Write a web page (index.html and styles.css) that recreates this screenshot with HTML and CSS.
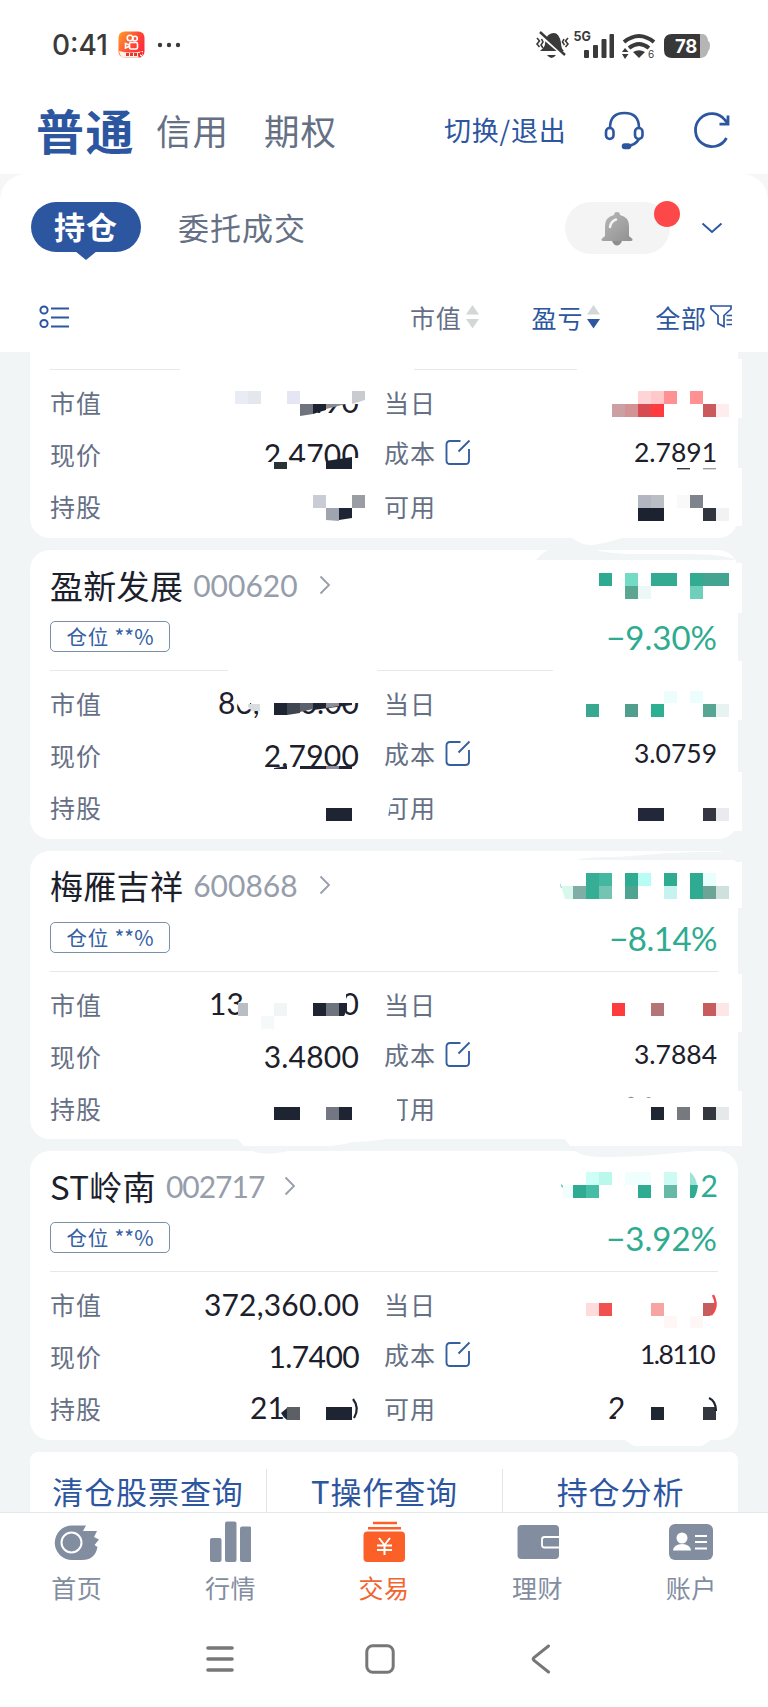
FILE: index.html
```html
<!DOCTYPE html>
<html lang="zh-CN">
<head>
<meta charset="utf-8">
<title>持仓</title>
<link rel="stylesheet" href="styles.css">
</head>
<body>
<svg class="defs" width="0" height="0">
  <symbol id="edit" viewBox="0 0 26 26"><path d="M15.500 2H5Q1.500 2 1.500 5.500V21.500Q1.500 25 5 25H20.500Q24 25 24 21.500V10M13.500 12.500L24.500 1.500" fill="none" stroke="#35609f" stroke-width="1.900"/></symbol>
  <symbol id="arrow" viewBox="0 0 12 20"><path d="M1.500 1.500L10 10L1.500 18.500" fill="none" stroke="#969dab" stroke-width="1.800"/></symbol>
</svg>
<div class="screen">
  <div class="status">
    <span class="clock">0:41</span>
    <svg class="app" width="27" height="28" viewBox="0 0 27 28">
      <defs><linearGradient id="g" x1="0" y1="0" x2="1" y2=".6"><stop offset="0" stop-color="#ffa02a"/><stop offset=".6" stop-color="#ff4a35"/><stop offset="1" stop-color="#ff2a3a"/></linearGradient></defs>
      <rect x=".5" y=".5" width="26" height="26" rx="6" fill="url(#g)"/>
      <path d="M1 20Q13 23 25 20V22Q25 26 20 26.500H6Q2 26 1 20Z" fill="#fff2e6"/>
      <g fill="none" stroke="#fff" stroke-width="1.600"><circle cx="12" cy="7" r="2.800"/><circle cx="17" cy="7.500" r="2.300"/><rect x="11.500" y="11.500" width="8" height="6.500" rx="1.500"/><path d="M11 14L7.500 12.500V17L11 15.500"/></g>
      <path d="M8 23.500H22M24 21L21 26" stroke="#e5372b" stroke-width="3" stroke-dasharray="3 1"/>
    </svg>
    <svg class="dots" width="24" height="6" viewBox="0 0 24 6" fill="#3a3a3a"><circle cx="3" cy="3" r="2.200"/><circle cx="12" cy="3" r="2.200"/><circle cx="21" cy="3" r="2.200"/></svg>
    <svg class="sys" width="176" height="32" viewBox="536 28 176 32">
      <g fill="#3a3a3a">
        <path d="M552 32.500Q560 30 562 42Q562 47 565 50H541Q546 46 546 43Q546 35 552 32.500Z"/><path d="M548 54H557Q552.500 60 548 54Z"/>
        <rect x="585" y="49" width="5" height="8" rx="1"/><rect x="594" y="44" width="5" height="13" rx="1"/><rect x="602.500" y="38" width="5" height="19" rx="1"/><rect x="610.500" y="33" width="4.500" height="24" rx="1"/>
        <path d="M634 51Q640 47.500 646 51L640 57Z"/><path d="M623 51L626 47L629.500 51ZM623 53H629.500L626 58Z"/>
      </g>
      <path d="M539 32L567 56" stroke="#fff" stroke-width="3"/><path d="M541 31L566 54" stroke="#3a3a3a" stroke-width="2.400"/>
      <path d="M538 37L540.500 40L538 43L540.500 46M542.500 38L544 41L542 44L544 47M569 37L566.500 40L569 43L566.500 46M565 38L563.500 41L565.500 44" fill="none" stroke="#3a3a3a" stroke-width="1.600"/>
      <g fill="none" stroke="#3a3a3a" stroke-width="4"><path d="M625 41Q640 29 655 41"/><path d="M630 47Q640 39 650 47"/></g>
      <text class="net" x="574.500" y="40">5G</text><text class="six" x="649" y="57">6</text>
      <path d="M704 33Q708.500 34 709 39.500Q711 41 711 45Q711 49 709 50.500Q708 56 702 57H698V33Z" fill="#b5b5b5"/>
      <path d="M673 33H701V57H673Q665 57 665 49V41Q665 33 673 33Z" fill="#383838"/>
      <text class="batt" x="687" y="52">78</text>
    </svg>
  </div>
  <div class="account">
    <span class="acct-on">普通</span><span class="acct">信用</span><span class="acct acct-last">期权</span>
    <span class="switch">切换/退出</span>
    <svg class="headset" width="42" height="42" viewBox="604 108 42 42" fill="none" stroke="#2d56a0" stroke-width="2.600"><path d="M611 127Q611 112 625.500 112Q640 112 640 127M640 138Q636 145 627 145"/><rect x="607" y="127" width="7.500" height="11" rx="3.700"/><rect x="636" y="127" width="7.500" height="11" rx="3.700"/><rect x="624" y="143.500" width="7" height="3.500" rx="1.700" fill="#2d56a0"/></svg>
    <svg class="refresh" width="40" height="40" viewBox="692 110 40 40" fill="none" stroke="#2d56a0" stroke-width="2.800"><path d="M727.500 138A16.500 16.500 0 1 1 726 120L729 123.500"/><path d="M729 115.500V124.200H720.500"/></svg>
  </div>
  <div class="panel-back"><div class="panel">
    <div class="views">
      <span class="view-on">持仓<svg class="tip" width="22" height="9" viewBox="0 0 22 9"><path d="M0 0H22L11 9Z" fill="#2d56a0"/></svg></span>
      <span class="view">委托成交</span>
      <span class="bell"><svg width="34" height="36" viewBox="0 0 34 36">
        <defs><linearGradient id="b" x1="0" y1="0" x2="1" y2="1"><stop offset="0" stop-color="#b9b9b9"/><stop offset="1" stop-color="#909090"/></linearGradient></defs>
        <path d="M17 1Q20 1 20 4Q29 6 29 15V25L32.500 28Q33 30 31 30H3Q1 30 1.500 28L5 25V15Q5 6 14 4Q14 1 17 1Z" fill="url(#b)"/><path d="M12 30H22Q20 34.500 17 34.500Q14 34.500 12 30Z" fill="#8e8e8e"/><path d="M10 16Q11 10 16 8.500" stroke="#f2f2f2" stroke-width="2.500" fill="none" stroke-linecap="round"/></svg><i class="badge"></i></span>
      <svg class="down" width="22" height="14" viewBox="0 0 22 14"><path d="M1.500 2.500L11 11L20.500 2.500" fill="none" stroke="#2d56a0" stroke-width="1.900"/></svg>
    </div>
    <div class="sorts">
      <svg class="list-ic" width="30" height="26" viewBox="39 305 30 26" fill="none" stroke="#2d56a0" stroke-width="2"><circle cx="44" cy="311" r="3.600"/><circle cx="44" cy="324.500" r="3.600"/><path d="M51 309.500H69M51 318.500H69M51 327.500H69"/></svg>
      <span class="sort s1">市值<svg width="13" height="24" viewBox="0 0 13 24" fill="#d3d7d8"><path d="M6.500 0L13 9.500H0Z"/><path d="M0 14H13L6.500 23.500Z"/></svg></span>
      <span class="sort blue s2">盈亏<svg width="13" height="24" viewBox="0 0 13 24"><path d="M6.500 0L13 9.500H0Z" fill="#d3d7d8"/><path d="M0 14H13L6.500 23.500Z" fill="#2d56a0"/></svg></span>
      <span class="sort blue s3">全部<svg width="23" height="23" viewBox="0 0 23 23" fill="none" stroke="#2d56a0" stroke-width="1.700"><path d="M1 1H21V4L14 10.500V21.500L8 18.500V10.500L1 4Z"/><path d="M16.500 10.500H22M16.500 15H22M16.500 19.500H22"/></svg></span>
    </div>
  </div></div>

  <div class="holdings">
    <section class="card card-first">
      <div class="rows">
        <div class="row"><span>市值</span></div><div class="row r"><span>当日</span></div>
        <div class="row"><span>现价</span><b class="num">2.4700</b></div><div class="row r up"><span>成本</span><svg class="edit"><use href="#edit"/></svg><b class="num sm">2.7891</b></div>
        <div class="row"><span>持股</span></div><div class="row r"><span>可用</span></div>
      </div>
    </section>
    <section class="card">
      <div class="head"><span class="name">盈新发展</span><span class="code">000620</span><svg class="go"><use href="#arrow"/></svg></div>
      <div class="sub"><span class="tag">仓位 <span class="stars">**%</span></span><span class="pct">−9.30%</span></div>
      <div class="rows">
        <div class="row"><span>市值</span></div><div class="row r"><span>当日</span></div>
        <div class="row"><span>现价</span><b class="num">2.7900</b></div><div class="row r up"><span>成本</span><svg class="edit"><use href="#edit"/></svg><b class="num sm">3.0759</b></div>
        <div class="row"><span>持股</span></div><div class="row r"><span>可用</span></div>
      </div>
    </section>
    <section class="card">
      <div class="head"><span class="name">梅雁吉祥</span><span class="code">600868</span><svg class="go"><use href="#arrow"/></svg></div>
      <div class="sub"><span class="tag">仓位 <span class="stars">**%</span></span><span class="pct pct-b">−8.14%</span></div>
      <div class="rows">
        <div class="row"><span>市值</span></div><div class="row r"><span>当日</span></div>
        <div class="row"><span>现价</span><b class="num">3.4800</b></div><div class="row r up"><span>成本</span><svg class="edit"><use href="#edit"/></svg><b class="num sm">3.7884</b></div>
        <div class="row"><span>持股</span></div><div class="row r"><span>可用</span></div>
      </div>
    </section>
    <section class="card">
      <div class="head"><span class="name">ST岭南</span><span class="code code-b">002717</span><svg class="go"><use href="#arrow"/></svg></div>
      <div class="sub"><span class="tag">仓位 <span class="stars">**%</span></span><span class="pct">−3.92%</span></div>
      <div class="rows">
        <div class="row"><span>市值</span><b class="num">372,360.00</b></div><div class="row r"><span>当日</span></div>
        <div class="row"><span>现价</span><b class="num ones">1.7400</b></div><div class="row r up"><span>成本</span><svg class="edit"><use href="#edit"/></svg><b class="num sm ones-sm">1.8110</b></div>
        <div class="row"><span>持股</span></div><div class="row r"><span>可用</span></div>
      </div>
    </section>
    <nav class="queries"><span>清仓股票查询</span><span>T操作查询</span><span>持仓分析</span></nav>

    <!-- privacy mosaic laid over the amounts -->
    <svg class="mosaic" width="768" height="1160" viewBox="0 352 768 1160">
      <g fill="#fff">
        <path d="M180 365H414V374H180ZM577 365H722V374H577ZM228 666H377V675H228ZM553 666H722V675H553Z"/>
        <path d="M730 359H742V418H730ZM730 468H742V526H730ZM730 563H742V613H730ZM730 661H742V720H730ZM730 772H742V831H730ZM730 862H742V908H730ZM730 974H742V1032H730ZM730 1091H742V1146H730Z"/>
        <path d="M572 538Q581 545 590 545Q600 545 622 538Z"/>
        <path d="M237 1138L244 1146H328Q342 1145 352 1142Q380 1141 388 1138Z"/>
        <path d="M564 1138L570 1146H742V1125H700Z"/>
        <path d="M623 1439L634 1446H702L712 1439Z"/>
      </g>
      <g fill="#f1f5f6">
        <path d="M536 560Q543 551 552 549H594Q604 554 640 554C690 554 718 553 734 559V560Z"/>
        <path d="M577 860Q584 857 610 857C650 856 650 852 720 852H742V860Z"/>
        <path d="M250 1150Q263 1157 288 1151Z"/><path d="M574 1150Q582 1157 600 1157C660 1157 670 1152 714 1150Z"/>
      </g>

      <!-- first card -->
      <text class="frag" x="359" y="413" text-anchor="end">490</text>
      <path d="M296 385H366V404H296Z" fill="#fff"/>
      <g><path fill="#e9ecf5" d="M235 391h13v13h-13z"/><path fill="#e4e7ec" d="M248 391h13v13h-13z"/><path fill="#e4e6f3" d="M287 391h13v13h-13z"/><path fill="#c9cbd0" d="M352 391h13v9l-13 4z"/>
      <path fill="#6f737d" d="M300 404h13v10l-13 2z"/><path fill="#1c2230" d="M313 404h13v6l-13 4z"/><path fill="#888c93" d="M326 404h20l-20 5z"/></g>
      <path d="M262 462H326V472H262ZM352 458H362V472H352Z" fill="#fff"/>
      <path fill="#2a3236" d="M274 462h13v7h-13z"/><path fill="#1c2230" d="M326 461l26-4v12h-26z"/>
      <path fill="#c9ccd5" d="M313 495h13v13h-13z"/><path fill="#9a9ea4" d="M352 495h13v13h-13z"/><path fill="#a0a4ad" d="M326 508h13v13l-13-1z"/><path fill="#1f2534" d="M339 508h13v10l-13 2z"/>
      <path fill="#ffd4d6" d="M638 391h13v13h-13z"/><path fill="#ffc9cc" d="M651 391h13v13h-13z"/><path fill="#ff9192" d="M664 391h13v13h-13zM690 391h13v13h-13z"/>
      <path fill="#cba0a4" d="M612 404h13v13h-13z"/><path fill="#d39294" d="M625 404h13v13h-13z"/><path fill="#d64c50" d="M638 404h13v13h-13z"/><path fill="#ff3b3e" d="M651 404h13v13h-13z"/><path fill="#cb5a5c" d="M703 404h13v13h-13z"/><path fill="#ffeced" d="M716 404h13v13h-13z"/>
      <path fill="#353942" d="M677 468h13v1.400h-13z"/><path fill="#9b9fa5" d="M703 468h13v1.400h-13z"/>
      <path fill="#b2b6c0" d="M638 495h13v13h-13z"/><path fill="#bbbfc5" d="M651 495h13v13h-13z"/><path fill="#7f838c" d="M690 495h13v13h-13z"/><path fill="#f9f9fa" d="M677 495h13v13h-13z"/><path fill="#1c2230" d="M638 508h26v13h-26z"/><path fill="#30353e" d="M703 508h13v13h-13z"/><path fill="#f2f2f5" d="M716 508h13v13h-13z"/>

      <!-- second card -->
      <text class="frag" x="218" y="714">86,</text><text class="frag" x="359" y="714" text-anchor="end">0.00</text>
      <path d="M230 688L236 703H366V688Z" fill="#fff"/>
      <path d="M236 700H250V709Q243 712 239 707Z" fill="#fff"/>
      <path fill="#d9dde0" d="M248 704h12v7h-8l-4-4z"/>
      <path fill="#1f2432" d="M274 703h13v12h-13z"/><path fill="#404552" d="M287 703h13v10l-13 2z"/><path fill="#5c606d" d="M300 703h13v6l-13 3z"/><path fill="#1f2432" d="M313 703h39v2l-39 5z"/><path fill="#8a8e96" d="M326 703h13v3l-13 2z"/>
      <path fill="#1f2432" d="M274 769v-1l13-2v3zM300 766h52v3h-52z"/><path fill="#8a8e96" d="M326 766h13v3h-13z"/>
      <path fill="#1f2432" d="M326 808h26v13h-26z"/>
      <path d="M382 797H394Q391 801 390 806L387 823H382Z" fill="#fff"/>
      <path fill="#2eaa90" d="M599 573h13v13h-13z"/><path fill="#73dbc5" d="M625 573h13v13h-13z"/><path fill="#33ab92" d="M651 573h26v13h-26zM690 573h13v13h-13z"/><path fill="#43a591" d="M703 573h26v13h-26z"/>
      <path fill="#5aa692" d="M625 586h13v13h-13z"/><path fill="#ebf8f5" d="M638 586h13v13h-13z"/><path fill="#6ed0bb" d="M690 586h13v13h-13z"/>
      <path fill="#ecfdfd" d="M664 691h13v12h-13zM690 691h13v12h-13z"/><path fill="#38a990" d="M586 704h13v13h-13z"/><path fill="#509f8e" d="M625 704h13v13h-13z"/><path fill="#2daf91" d="M651 704h13v13h-13z"/><path fill="#57a593" d="M703 704h13v13h-13z"/><path fill="#e6f3f0" d="M716 704h13v13h-13z"/>
      <path fill="#22283a" d="M638 808h26v13h-26z"/><path fill="#343641" d="M703 808h13v13h-13z"/><path fill="#ebebef" d="M716 808h13v13h-13z"/>

      <!-- third card -->
      <text class="frag" x="209" y="1015">13</text><text class="frag" x="359" y="1015" text-anchor="end">0</text>
      <path d="M338 990H346V1020H338Z" fill="#fff"/>
      <path fill="#b9bec4" d="M238 1003h10v13h-10z"/><path fill="#f2f5f6" d="M274 1003h13v13h-13z"/><path fill="#f6f9fa" d="M261 1016h13v13h-13z"/><path fill="#1f2432" d="M313 1003h13v13h-13zM339 1003h8v7l-3 6h-5z"/><path fill="#6f737d" d="M326 1003h13v13h-13z"/>
      <path fill="#1f2432" d="M274 1107h26v13h-26zM339 1107h13v13h-13z"/><path fill="#737782" d="M326 1107h13v13h-13z"/>
      <path d="M382 1095H397V1101H401V1124H382Z" fill="#fff"/>
      <path fill="#35ae95" d="M586 873h13v26h-13z"/><path fill="#43b79f" d="M599 873h13v13h-13z"/><path fill="#2eab90" d="M625 873h13v13h-13zM664 873h13v13h-13zM690 873h13v26h-13zM560 883l2 5h-1z"/><path fill="#b8fdf5" d="M638 873h13v13h-13z"/><path fill="#e8fffd" d="M703 873h13v13h-13z"/>
      <path fill="#d8f8ee" d="M561 886h12v13h-8z"/><path fill="#80aea7" d="M573 886h13v13h-13z"/><path fill="#73c4b3" d="M599 886h13v13h-13z"/><path fill="#4fa491" d="M625 886h13v13h-13z"/><path fill="#c6f3ef" d="M664 886h13v13h-13z"/><path fill="#6ca496" d="M703 886h13v13h-13z"/><path fill="#cfe1dd" d="M716 886h13v13h-13z"/>
      <path fill="#ff3c3c" d="M612 1003h13v13h-13z"/><path fill="#b37575" d="M651 1003h13v13h-13z"/><path fill="#c75c5e" d="M703 1003h13v13h-13z"/><path fill="#fde6e6" d="M716 1003h13v13h-13z"/>
      <path fill="#1f2733" d="M651 1107h13v13h-13z"/><path fill="#76797e" d="M677 1107h13v13h-13z"/><path fill="#34373e" d="M703 1107h13v13h-13z"/><path fill="#e6e9ea" d="M716 1107h13v13h-13z"/><path fill="#8f8f94" d="M628 1098q3-2.500 6 0zM646 1098q3-2 5 0z"/>

      <!-- fourth card -->
      <text class="frag green" x="718" y="1197" text-anchor="end">2</text>
      <path fill="#cbfff7" d="M586 1172h13v13h-13z"/><path fill="#baf8ec" d="M599 1172h13v13h-13z"/><path fill="#f0fffd" d="M625 1172h26v13h-26zM563 1185h10v13h-10z"/><path fill="#cdfbf4" d="M664 1172h13v13h-13z"/><path fill="#9ee3d7" d="M690 1172q6 5 7 13h-7z"/>
      <path fill="#2eab90" d="M573 1185h13v13h-13zM638 1185h13v13h-13zM690 1185h8q-1 9-4 13h-4zM561 1184l2 2-1 2z"/><path fill="#48bda6" d="M586 1185h13v13h-13z"/><path fill="#68b8a8" d="M664 1185h13v13h-13z"/>
      <path fill="#ffdcdc" d="M586 1303h13v13h-13z"/><path fill="#f05050" d="M599 1303h13v13h-13z"/><path fill="#f7a5a3" d="M651 1303h13v13h-13z"/><path fill="#c75c5e" d="M703 1303h12q0 8-5 13h-7z"/><path fill="none" stroke="#f04a4a" stroke-width="2.400" d="M713 1295Q719 1306 711 1315"/><path fill="#fff7f6" d="M664 1316h13v12h-13zM690 1316h13v12h-13z"/>
      <text class="frag" x="250" y="1419">21</text><path fill="#1f2432" d="M281 1413l6-5v12q-4-3-6-7z"/><path fill="#5c6064" d="M287 1407h13v13h-13z"/><path fill="#1f2432" d="M326 1407h26v13h-26z"/><path fill="none" stroke="#1f2432" stroke-width="2.200" d="M353 1399Q360 1408 354 1418"/>
      <text class="frag" x="608" y="1419">2</text><path d="M617 1413L625 1405V1422H615Z" fill="#fff"/>
      <path fill="#1f2733" d="M651 1407h13v13h-13z"/><path fill="#34373e" d="M703 1407h13v13h-13z"/><path fill="none" stroke="#1f2432" stroke-width="2.200" d="M709 1398Q716 1401 716 1411"/>
    </svg>
  </div>

  <nav class="tabs">
    <div class="tab"><svg width="46" height="42" viewBox="54 1520 46 42"><path d="M72 1525.500H86L83 1531H97L94 1537L99 1539.500L94.500 1545L97.500 1547Q95 1560 82 1560H72A17.200 17.200 0 0 1 72 1525.500Z" fill="#828da0"/><circle cx="71.500" cy="1542.500" r="10" fill="none" stroke="#fff" stroke-width="2"/></svg>首页</div>
    <div class="tab"><svg width="42" height="42" viewBox="209 1520 42 42" fill="#828da0"><rect x="210" y="1538" width="11.500" height="24" rx="2"/><rect x="225" y="1521.500" width="11.500" height="40.500" rx="2"/><rect x="240" y="1526.500" width="11.500" height="35.500" rx="2"/></svg>行情</div>
    <div class="tab tab-on"><svg width="42" height="42" viewBox="363 1520 42 42"><rect x="363.500" y="1531.500" width="41.500" height="30.500" rx="4" fill="#fb6028"/><path d="M373 1523H397M368 1528.200H401" stroke="#fb6028" stroke-width="2.600"/><path d="M379 1538L384.500 1545L390 1538M384.500 1545V1555M377 1545.500H392M377 1550H392" fill="none" stroke="#fff" stroke-width="2"/></svg>交易</div>
    <div class="tab"><svg width="42" height="42" viewBox="516 1520 42 42"><rect x="516.500" y="1525" width="41.500" height="34" rx="4" fill="#828da0"/><path d="M558 1537H543.500Q541 1537 541 1539.500V1545Q541 1547.500 543.500 1547.500H558" fill="none" stroke="#fff" stroke-width="1.800"/></svg>理财</div>
    <div class="tab"><svg width="44" height="42" viewBox="669 1520 44 42"><rect x="669" y="1524" width="44" height="36" rx="6" fill="#828da0"/><g fill="#fff"><circle cx="682" cy="1538" r="5.500"/><path d="M673 1550.500Q674 1544 682 1544Q690 1544 691 1550.500Z"/></g><path d="M695 1536H707M695 1542H707M695 1548.500H707" stroke="#fff" stroke-width="2"/></svg>账户</div>
  </nav>
  <div class="sysnav">
    <svg width="30" height="30" viewBox="0 0 30 30"><path d="M3 4H27M3 15H27M3 26H27" stroke="#777" stroke-width="3.600" stroke-linecap="round"/></svg>
    <svg width="30" height="30" viewBox="0 0 30 30"><rect x="1.800" y="1.800" width="26.400" height="26.400" rx="6" fill="none" stroke="#777" stroke-width="3"/></svg>
    <svg class="back" width="20" height="30" viewBox="0 0 20 30"><path d="M17.500 2L3 13.500Q1.500 15 3 16.500L17.500 28" fill="none" stroke="#777" stroke-width="3" stroke-linecap="round"/></svg>
  </div>
</div>
</body>
</html>
```
FILE: styles.css
```css
* { box-sizing: border-box; }
body { margin: 0; background: #fff; font-family: "Noto Sans CJK SC", sans-serif; color: #667085; }
svg { display: block; flex: none; }
span { white-space: nowrap; }
.defs { position: absolute; }
.screen { width: 768px; height: 1707px; overflow: hidden; display: flex; flex-direction: column; background: #fff; }

.status { height: 92px; display: flex; align-items: center; padding: 0 56px 2px 52px; }
.clock { font: 500 28px/30px Inter, sans-serif; color: #3a3a3a; width: 66px; letter-spacing: 0; }
.dots { margin-left: 12px; }
.sys { margin-left: auto; margin-right: 1px; }
.net { font: 700 12.500px Inter, sans-serif; fill: #3a3a3a; }
.six { font: 10px Inter, sans-serif; fill: #3a3a3a; }
.batt { font: 700 18.500px Inter, sans-serif; fill: #fff; text-anchor: middle; }
.status .sys .batt { letter-spacing: -.3px; }

.account { height: 82px; display: flex; align-items: center; padding: 0 36px 6px; }
.acct-on { font-size: 48px; font-weight: 700; line-height: 60px; letter-spacing: 1.500px; color: #2d56a0; width: 120px; padding-bottom: 2px; }
.acct { font-size: 35.500px; letter-spacing: 1px; line-height: 50px; width: 108px; }
.switch { margin-left: 72px; width: 124px; font-size: 27px; letter-spacing: .8px; color: #2d56a0; line-height: 40px; }
.acct-last { width: 108px; }
.headset { margin-left: 35px; }
.refresh { margin-left: 46px; }

.panel-back { background: #f6f6f6; }
.panel { height: 178px; background: #fff; border-radius: 26px 26px 0 0; padding: 28px 0 0 31px; }
.views { display: flex; align-items: center; height: 52px; }
.view-on { position: relative; width: 110px; height: 50px; margin-top: -2px; border-radius: 25px; background: #2d56a0; color: #fff; font-weight: 700; font-size: 31px; letter-spacing: 1px; line-height: 48px; text-align: center; }
.tip { position: absolute; left: 44px; top: 49px; }
.view { margin-left: 37px; font-size: 31px; letter-spacing: 1px; line-height: 50px; width: 128px; padding-bottom: 2px; }
.bell { position: relative; width: 105px; height: 52px; border-radius: 26px; background: #f4f4f5; margin-left: 259px; padding: 9px 0 0 35px; }
.badge { position: absolute; left: 89px; top: -1px; width: 26px; height: 26px; border-radius: 50%; background: #fc4848; }
.down { margin-left: 31px; }
.sorts { display: flex; align-items: center; height: 72px; margin-top: 26px; padding-top: 1px; }
.list-ic { margin-left: 8px; }
.sort { display: flex; align-items: center; gap: 4px; font-size: 25px; letter-spacing: .8px; line-height: 38px; }
.blue { color: #2d56a0; }
.s1 { margin-left: 341px; }
.s2 { margin-left: 53px; }
.s3 { margin-left: 55px; gap: 3px; }

.holdings { position: relative; height: 1160px; overflow: hidden; background: #f1f5f6; display: flex; flex-direction: column; gap: 12px; }
.card { flex: none; width: 708px; height: 288.660px; margin-left: 30px; background: #fff; border-radius: 20px; padding: 0 20px; }
.card-first { height: 186px; border-radius: 0 0 20px 20px; padding-top: 17px; }
.head { display: flex; align-items: center; height: 70px; padding-bottom: 1px; }
.name { font-size: 33px; letter-spacing: .3px; line-height: 48px; color: #1c202b; }
.code { font: 30px/40px Lato, sans-serif; color: #969dab; margin-left: 10px; width: 106px; }
.code-b { width: 98px; letter-spacing: -1px; }
.go { width: 12px; height: 20px; margin-left: 20px; }
.sub { display: flex; justify-content: space-between; align-items: flex-start; height: 50px; padding-top: 1px; }
.tag { width: 120px; height: 31px; border: 1.500px solid #7890a8; border-radius: 5px; font-size: 20.500px; letter-spacing: .8px; line-height: 29px; color: #3560a3; text-align: center; }
.stars { font-size: 21px; letter-spacing: 0; }
.pct { font: 33px/32px Lato, sans-serif; color: #2eab90; padding-right: 1px; }
.pct-b { letter-spacing: -.5px; }
.rows { border-top: 1px solid #e6e8ea; display: grid; grid-template-columns: 309px 333px; column-gap: 25px; grid-auto-rows: 52px; padding-top: 6px; }
.row { display: flex; align-items: center; font-size: 25px; letter-spacing: 1px; line-height: 40px; color: #667085; }
.up { padding-bottom: 4px; }
.row .num { margin-left: auto; font: 30px/40px Lato, sans-serif; letter-spacing: .2px; color: #1c202b; }
.row .sm { font-size: 26.500px; letter-spacing: 0; }
.row .ones { letter-spacing: -.6px; }
.row .ones-sm { letter-spacing: -1.500px; padding-right: 3px; }
.edit { width: 26px; height: 26px; margin-left: 9px; }
.queries { flex: none; margin-left: 30px; width: 708px; height: 60px; background: #fff; border-radius: 8px 8px 0 0; padding-top: 17px; display: grid; grid-template-columns: 236px 236px 236px; }
.queries span { text-align: center; font-size: 31px; letter-spacing: .9px; line-height: 43px; height: 43px; color: #2d56a0; border-left: 1px solid #e2e5e8; }
.queries span:first-child { border-left: 0; }
.mosaic { position: absolute; left: 0; top: 0; }
.frag { font: 30px Lato, sans-serif; fill: #1c202b; }
.green { fill: #2eab90; }

.tabs { height: 109px; border-top: 1px solid #e2e7ea; display: grid; grid-template-columns: repeat(5, 1fr); background: #fff; }
.tab { display: flex; flex-direction: column; align-items: center; padding-top: 7px; gap: 6px; font-size: 25px; letter-spacing: .5px; line-height: 38px; color: #828da0; }
.tab-on { color: #f26531; }
.sysnav { display: flex; align-items: center; height: 76px; padding-left: 205px; gap: 130px; }
.back { margin-left: 6px; }
```
